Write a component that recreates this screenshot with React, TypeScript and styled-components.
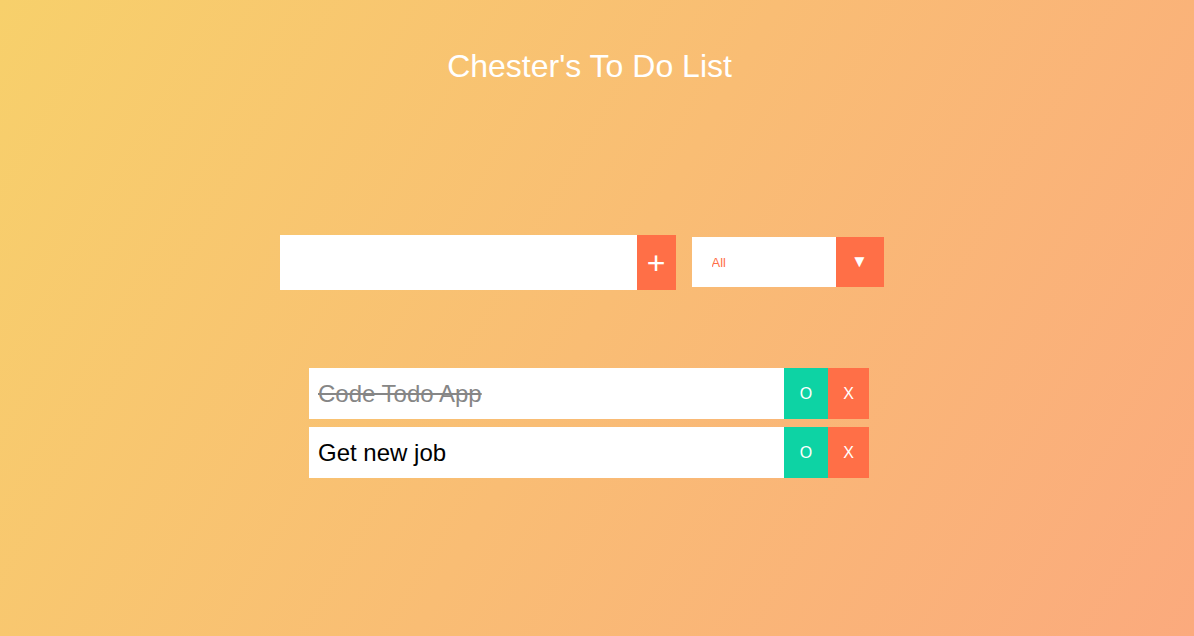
import styled, { createGlobalStyle } from 'styled-components';

const GlobalStyle = createGlobalStyle`
  * {
    margin: 0;
    padding: 0;
    box-sizing: border-box;
  }

  body {
    min-height: 100vh;
    background-image: linear-gradient(120deg, #f7d06b 0%, #fbaa7d 100%);
    font-family: 'Liberation Sans', Arial, sans-serif;
    color: white;
  }
`;

type Todo = {
  text: string;
  completed: boolean;
};

const todos: Todo[] = [
  { text: 'Code Todo App', completed: true },
  { text: 'Get new job', completed: false },
];

export default function App() {
  return (
    <>
      <GlobalStyle />
      <Page>
        <Header>
          <h1>Chester's To Do List</h1>
        </Header>
        <Form onSubmit={(e) => e.preventDefault()}>
          <InputGroup>
            <TodoInput type='text' />
            <AddButton type='submit'>+</AddButton>
          </InputGroup>
          <SelectWrap>
            <FilterSelect defaultValue='all'>
              <option value='all'>All</option>
              <option value='completed'>Completed</option>
              <option value='uncompleted'>Uncompleted</option>
            </FilterSelect>
          </SelectWrap>
        </Form>
        <TodoList>
          {todos.map((todo) => (
            <TodoRow key={todo.text}>
              <TodoText completed={todo.completed}>{todo.text}</TodoText>
              <RowButton kind='complete'>O</RowButton>
              <RowButton kind='trash'>X</RowButton>
            </TodoRow>
          ))}
        </TodoList>
      </Page>
    </>
  );
}

const Page = styled.div`
  padding-right: 15px;
`;

const Header = styled.header`
  height: 127px;
  display: flex;
  justify-content: center;
  align-items: center;

  h1 {
    font-size: 32px;
    font-weight: 400;
    padding-top: 6px;
  }
`;

const Form = styled.form`
  display: flex;
  justify-content: center;
  align-items: flex-start;
  padding-top: 108px;
`;

const InputGroup = styled.div`
  display: flex;
  height: 55px;
`;

const TodoInput = styled.input`
  width: 357px;
  height: 55px;
  border: none;
  outline: none;
  background: white;
  padding: 8px;
  font-size: 32px;
  font-family: inherit;
`;

const AddButton = styled.button`
  width: 39px;
  height: 55px;
  border: none;
  background: #ff6f47;
  color: white;
  font-size: 32px;
  font-family: inherit;
  line-height: 1;
  cursor: pointer;
`;

const SelectWrap = styled.div`
  margin: 2px 16px 0;
  position: relative;
  overflow: hidden;
  width: 192px;
  height: 50px;

  &::after {
    content: '\\25BC';
    position: absolute;
    top: 0;
    right: 0;
    width: 48px;
    height: 50px;
    display: flex;
    align-items: center;
    justify-content: center;
    background: #ff6f47;
    color: white;
    font-size: 17px;
    pointer-events: none;
  }
`;

const FilterSelect = styled.select`
  appearance: none;
  width: 100%;
  height: 50px;
  border: none;
  outline: none;
  background: white;
  color: #ff6f47;
  font-family: inherit;
  font-size: 13px;
  padding: 0 16px 0 20px;
  cursor: pointer;
`;

const TodoList = styled.ul`
  list-style: none;
  display: flex;
  flex-direction: column;
  align-items: center;
  gap: 8px;
  padding: 78px 1px 0 0;
`;

const TodoRow = styled.li`
  width: 560px;
  height: 51px;
  display: flex;
  align-items: stretch;
  background: white;
`;

const TodoText = styled.span<{ completed: boolean }>`
  flex: 1;
  display: flex;
  align-items: center;
  padding: 0 9px;
  font-size: 24px;
  color: ${(props) => (props.completed ? '#868686' : 'black')};
  text-decoration: ${(props) => (props.completed ? 'line-through' : 'none')};
`;

const RowButton = styled.button<{ kind: 'complete' | 'trash' }>`
  width: ${(props) => (props.kind === 'complete' ? '44px' : '41px')};
  border: none;
  background: ${(props) => (props.kind === 'complete' ? '#0dd3a4' : '#ff6f47')};
  color: white;
  font-family: inherit;
  font-size: 16px;
  cursor: pointer;
`;
